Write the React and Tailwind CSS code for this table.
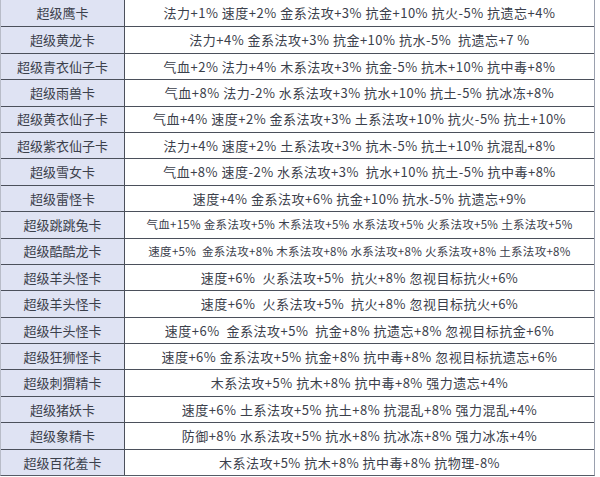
const rows = [
  ["超级鹰卡", "法力+1% 速度+2% 金系法攻+3% 抗金+10% 抗火-5% 抗遗忘+4%"],
  ["超级黄龙卡", "法力+4% 金系法攻+3% 抗金+10% 抗水-5%  抗遗忘+7 %"],
  ["超级青衣仙子卡", "气血+2% 法力+4% 木系法攻+3% 抗金-5% 抗木+10% 抗中毒+8%"],
  ["超级雨兽卡", "气血+8% 法力-2% 水系法攻+3% 抗水+10% 抗土-5% 抗冰冻+8%"],
  ["超级黄衣仙子卡", "气血+4% 速度+2% 金系法攻+3% 土系法攻+10% 抗火-5% 抗土+10%"],
  ["超级紫衣仙子卡", "法力+4% 速度+2% 土系法攻+3% 抗木-5% 抗土+10% 抗混乱+8%"],
  ["超级雪女卡", "气血+8% 速度-2% 水系法攻+3%  抗水+10% 抗土-5% 抗中毒+8%"],
  ["超级雷怪卡", "速度+4% 金系法攻+6% 抗金+10% 抗水-5% 抗遗忘+9%"],
  ["超级跳跳兔卡", "气血+15% 金系法攻+5% 木系法攻+5% 水系法攻+5% 火系法攻+5% 土系法攻+5%", true],
  ["超级酷酷龙卡", "速度+5%  金系法攻+8% 木系法攻+8% 水系法攻+8% 火系法攻+8% 土系法攻+8%", true],
  ["超级羊头怪卡", "速度+6%  火系法攻+5%  抗火+8% 忽视目标抗火+6%"],
  ["超级羊头怪卡", "速度+6%  火系法攻+5%  抗火+8% 忽视目标抗火+6%"],
  ["超级牛头怪卡", "速度+6%  金系法攻+5%  抗金+8% 抗遗忘+8% 忽视目标抗金+6%"],
  ["超级狂狮怪卡", "速度+6% 金系法攻+5% 抗金+8% 抗中毒+8% 忽视目标抗遗忘+6%"],
  ["超级刺猬精卡", "木系法攻+5% 抗木+8% 抗中毒+8% 强力遗忘+4%"],
  ["超级猪妖卡", "速度+6% 土系法攻+5% 抗土+8% 抗混乱+8% 强力混乱+4%"],
  ["超级象精卡", "防御+8% 水系法攻+5% 抗水+8% 抗冰冻+8% 强力冰冻+4%"],
  ["超级百花羞卡", "木系法攻+5% 抗木+8% 抗中毒+8% 抗物理-8%"],
];

export default function App() {
  return (
    <div
      className="w-[600px] h-[477px] bg-white overflow-hidden"
      style={{ fontFamily: '"Microsoft YaHei", "Noto Sans CJK SC", sans-serif' }}
    >
      <div className="w-[595px] h-[476px] border-l border-[#b8bcc8] border-r border-r-[#9aa0ae] border-b border-b-[#555b66] grid grid-cols-[124px_1fr] grid-rows-[repeat(18,minmax(0,1fr))]">
        {rows.map(([name, desc, small], i) => (
          <div key={i} className="contents">
            <div
              className={`bg-[#dfe3f3] border-r border-[#4b505b] flex items-center justify-center text-[13px] text-[#3b404b] whitespace-nowrap ${i > 0 ? "border-t border-t-[#4b505b]" : ""}`}
            >
              {name}
            </div>
            <div
              className={`flex items-center justify-center whitespace-pre text-[#3b404b] ${small ? "text-[11.5px] tracking-[0.3px]" : "text-[13px] tracking-[0.5px]"} ${i > 0 ? "border-t border-t-[#4b505b]" : ""}`}
            >
              {desc}
            </div>
          </div>
        ))}
      </div>
    </div>
  );
}
